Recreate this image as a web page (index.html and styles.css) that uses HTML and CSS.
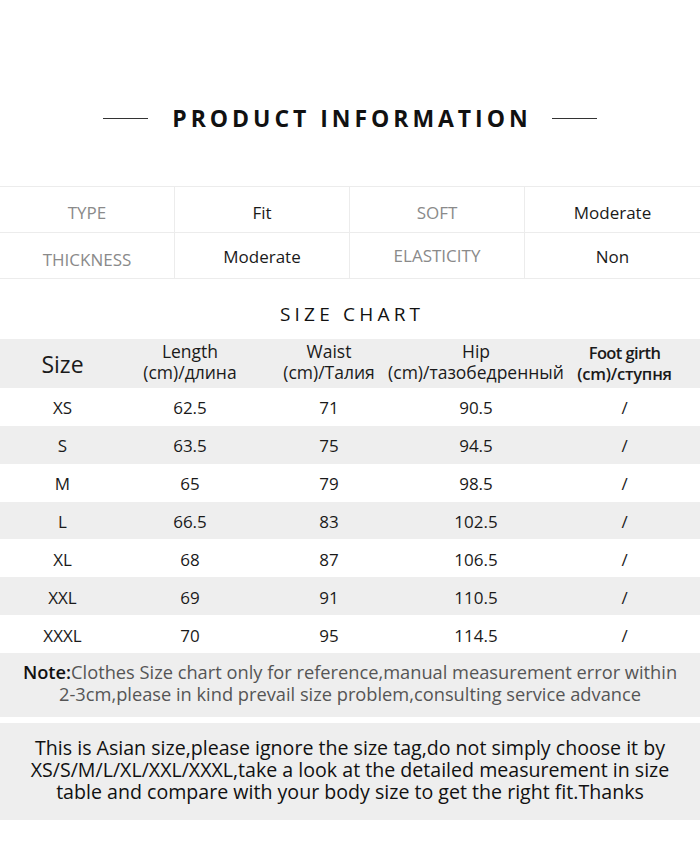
FILE: index.html
```html
<!DOCTYPE html>
<html>
<head>
<meta charset="utf-8">
<link rel="stylesheet" href="styles.css">
</head>
<body>
<div class="page">
  <header class="title-block">
    <span class="rule"></span>
    <h1 class="title">PRODUCT INFORMATION</h1>
    <span class="rule"></span>
  </header>

  <div class="info">
    <div class="info-row">
      <div class="cell label">TYPE</div>
      <div class="cell value">Fit</div>
      <div class="cell label">SOFT</div>
      <div class="cell value">Moderate</div>
    </div>
    <div class="info-row">
      <div class="cell label low">THICKNESS</div>
      <div class="cell value">Moderate</div>
      <div class="cell label high">ELASTICITY</div>
      <div class="cell value">Non</div>
    </div>
  </div>

  <h2 class="subtitle">SIZE CHART</h2>

  <div class="chart">
    <div class="row head">
      <div class="c size-h">Size</div>
      <div class="c"><span>Length</span><span>(cm)/длина</span></div>
      <div class="c"><span>Waist</span><span>(cm)/Талия</span></div>
      <div class="c"><span>Hip</span><span>(cm)/тазобедренный</span></div>
      <div class="c foot"><span class="fg">Foot girth</span><span>(cm)/ступня</span></div>
    </div>
    <div class="row"><div class="c">XS</div><div class="c">62.5</div><div class="c">71</div><div class="c">90.5</div><div class="c">/</div></div>
    <div class="row alt"><div class="c">S</div><div class="c">63.5</div><div class="c">75</div><div class="c">94.5</div><div class="c">/</div></div>
    <div class="row"><div class="c">M</div><div class="c">65</div><div class="c">79</div><div class="c">98.5</div><div class="c">/</div></div>
    <div class="row alt"><div class="c">L</div><div class="c">66.5</div><div class="c">83</div><div class="c">102.5</div><div class="c">/</div></div>
    <div class="row"><div class="c">XL</div><div class="c">68</div><div class="c">87</div><div class="c">106.5</div><div class="c">/</div></div>
    <div class="row alt"><div class="c">XXL</div><div class="c">69</div><div class="c">91</div><div class="c">110.5</div><div class="c">/</div></div>
    <div class="row"><div class="c">XXXL</div><div class="c">70</div><div class="c">95</div><div class="c">114.5</div><div class="c">/</div></div>
  </div>

  <div class="note">
    <p><strong>Note:</strong>Clothes Size chart only for reference,manual measurement error within<br>2-3cm,please in kind prevail size problem,consulting service advance</p>
  </div>

  <div class="asian">
    <p>This is Asian size,please ignore the size tag,do not simply choose it by<br>XS/S/M/L/XL/XXL/XXXL,take a look at the detailed measurement in size<br>table and compare with your body size to get the right fit.Thanks</p>
  </div>
</div>
</body>
</html>
```

FILE: styles.css
```css
html, body {
  margin: 0;
  padding: 0;
  background: #ffffff;
}

.page {
  width: 700px;
  font-family: "Open Sans", "Noto Sans", sans-serif;
  color: #222;
}

.title-block {
  height: 186px;
  box-sizing: border-box;
  padding-top: 103px;
  display: flex;
  justify-content: center;
  align-items: flex-start;
  gap: 24px;
}

.rule {
  width: 45px;
  height: 1px;
  background: #333;
  margin-top: 15px;
}

.title {
  margin: 0;
  font-size: 23px;
  line-height: 30px;
  font-weight: 700;
  letter-spacing: 3.95px;
  color: #111;
  margin-right: -3.95px;
}

.info {
  border-top: 1px solid #ececec;
}

.info-row {
  display: grid;
  grid-template-columns: 175px 175px 175px 175px;
  height: 46px;
  border-bottom: 1px solid #ececec;
  box-sizing: border-box;
}

.cell {
  display: flex;
  align-items: center;
  justify-content: center;
  font-size: 17px;
  border-right: 1px solid #ececec;
  padding-top: 6px;
}

.info-row + .info-row .cell {
  padding-top: 2px;
}

.cell:last-child {
  border-right: none;
}

.label {
  color: #8a8a8a;
}

.value {
  color: #1a1a1a;
}

.info-row + .info-row .low {
  padding-top: 7px;
}

.info-row + .info-row .high {
  padding-top: 0;
}

.subtitle {
  margin: 20px 0 10px;
  font-size: 19px;
  line-height: 30px;
  font-weight: 400;
  letter-spacing: 4.2px;
  margin-right: -4.2px;
  text-align: center;
  color: #111;
}

.row {
  display: grid;
  grid-template-columns: 125px 130px 148px 146px 151px;
  height: 37.86px;
}

.row.alt {
  background: #eeeeee;
}

.row.head {
  height: 49px;
  background: #eeeeee;
}

.c {
  display: flex;
  flex-direction: column;
  align-items: center;
  justify-content: center;
  font-size: 17px;
  color: #1a1a1a;
  white-space: nowrap;
  padding-top: 2px;
}

.head .c {
  font-size: 17.5px;
  line-height: 21px;
  color: #1a1a1a;
  padding-top: 0;
  padding-bottom: 3px;
}

.head .c.size-h {
  font-size: 23px;
  padding-top: 2px;
  padding-bottom: 0;
}

.head .c.foot {
  font-size: 16.5px;
  font-weight: 600;
  letter-spacing: -0.2px;
  padding-top: 0;
  padding-bottom: 1px;
}

.head .c.foot .fg {
  letter-spacing: -0.6px;
}

.note {
  background: #eeeeee;
  height: 64px;
  display: flex;
  align-items: center;
  justify-content: center;
  margin-bottom: 6px;
}

.note p, .asian p {
  margin: 0;
  text-align: center;
  line-height: 22px;
  white-space: nowrap;
}

.note p {
  font-size: 18.25px;
  color: #555;
  padding-bottom: 5px;
}

.note strong {
  font-weight: 600;
  color: #111;
}

.asian {
  background: #eeeeee;
  height: 97px;
  display: flex;
  align-items: center;
  justify-content: center;
}

.asian p {
  font-size: 19.6px;
  color: #111;
  padding-bottom: 4px;
}
```
